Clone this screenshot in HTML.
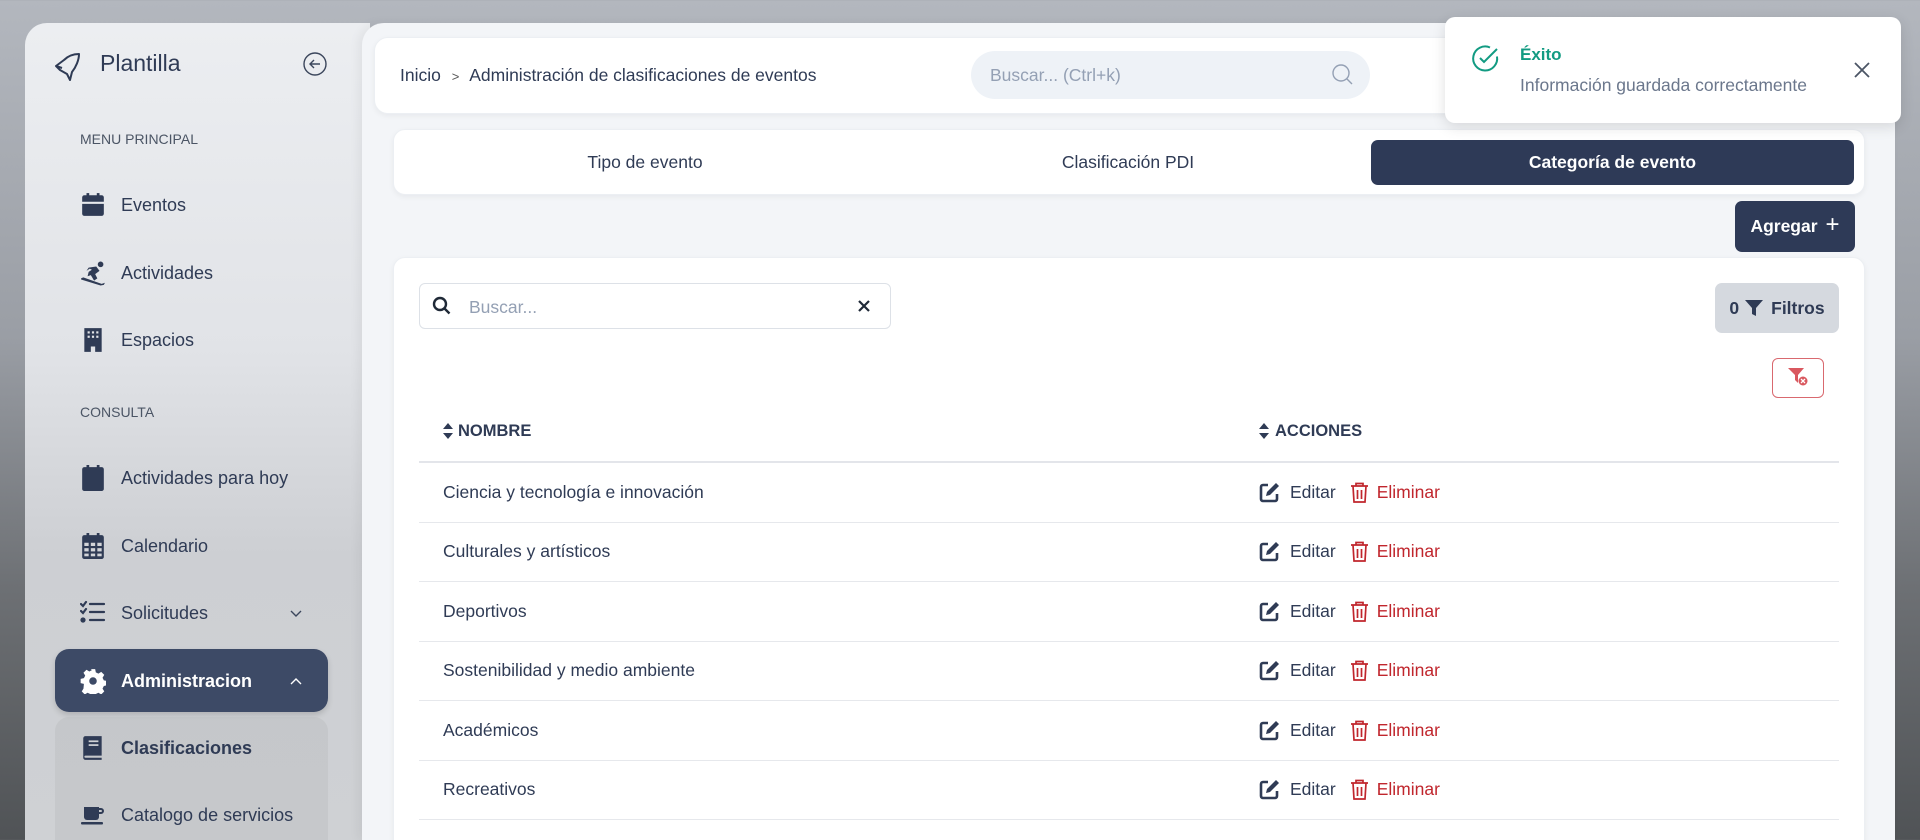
<!DOCTYPE html>
<html><head><meta charset="utf-8"><style>
*{box-sizing:border-box;margin:0;padding:0}
html{width:1920px;height:840px;overflow:hidden}
body{width:1920px;height:840px;overflow:hidden;font-family:"Liberation Sans",sans-serif;color:#2f3b55;position:relative;
background:linear-gradient(180deg,#b3b7be 0%,#9a9ea5 40%,#6d7074 70%,#505356 100%);}
.abs{position:absolute}
.side{left:25px;top:23px;width:345px;height:817px;border-radius:22px 0 0 0;background:linear-gradient(180deg,#eceef1 0%,#e1e3e7 40%,#cdcfd3 65%,#cfd1d4 100%);}
.main{left:362px;top:23px;width:1533px;height:817px;border-radius:22px 22px 0 0;background:#f3f5f8;box-shadow:-4px 0 10px rgba(0,0,0,.05)}
.card{background:#fff;border-radius:12px;box-shadow:0 2px 6px rgba(0,0,0,.05);border:1px solid #eceff3}
.item{position:absolute;left:80px;display:flex;align-items:center;font-size:18px;color:#2f3b55;height:30px}
.item svg{width:26px;height:26px;margin-right:15px}
.sec{position:absolute;left:80px;font-size:14px;color:#4b5565}
.tab{position:absolute;top:140px;height:45px;display:flex;align-items:center;justify-content:center;font-size:17.5px;color:#2f3b55}
.row{position:absolute;left:419px;width:1420px;height:59.5px;border-bottom:1.5px solid #e6e8ec;font-size:17.5px;display:flex;align-items:center}
.row .n{position:absolute;left:24px}
.row .a{position:absolute;left:840px;display:flex;align-items:center}
.ed{color:#2f3b55;margin:0 14px 0 10px}
.el{color:#c0262d;margin-left:8px}
</style></head><body>
<div class="abs side"></div>
<div class="abs main"></div>

<!-- sidebar -->
<svg class="abs" style="left:54px;top:52px" width="28" height="30" viewBox="0 0 28 30" fill="none" stroke="#2f3b55" stroke-width="2" stroke-linejoin="round"><path d="M2 14 L10 8 C15 3 21 2 25 2 C25 8 22 15 18 20 L16 28 L13 22 L6 18 Z"/><path d="M8 16 L2 14"/></svg>
<div class="abs" style="left:100px;top:50px;font-size:23px;color:#2f3b55">Plantilla</div>
<svg class="abs" style="left:303px;top:52px" width="24" height="24" viewBox="0 0 24 24" fill="none" stroke="#3b465c" stroke-width="1.4"><circle cx="12" cy="12" r="11"/><path d="M17 12H7M11 8l-4 4 4 4"/></svg>
<div class="sec" style="top:131px">MENU PRINCIPAL</div>
<div class="item" style="top:190px"><svg viewBox="0 0 24 24" fill="#2f3b55"><rect x="6" y="1" width="2.5" height="4"/><rect x="15.5" y="1" width="2.5" height="4"/><path d="M2 5a2 2 0 0 1 2-2h16a2 2 0 0 1 2 2v4H2z"/><path d="M2 11h20v9a2 2 0 0 1-2 2H4a2 2 0 0 1-2-2z"/></svg>Eventos</div>
<div class="item" style="top:258px"><svg viewBox="0 0 24 24" fill="#2f3b55"><circle cx="19" cy="4" r="2.6"/><path d="M8 7l7-1 3 4-4 3 2 4-3 2-3-5 -3 1 1-4 3-2-2-1-3 2z"/><path d="M1 17l2-1 17 6 3-1-1 2-3 .5L1 18z"/></svg>Actividades</div>
<div class="item" style="top:325px"><svg viewBox="0 0 24 24" fill="#2f3b55"><path d="M4 1h16v22h-6v-5h-4v5H4z"/><g fill="#e2e4e8"><rect x="7" y="4" width="2" height="2"/><rect x="11" y="4" width="2" height="2"/><rect x="15" y="4" width="2" height="2"/><rect x="7" y="8" width="2" height="2"/><rect x="11" y="8" width="2" height="2"/><rect x="15" y="8" width="2" height="2"/></g></svg>Espacios</div>
<div class="sec" style="top:404px">CONSULTA</div>
<div class="item" style="top:463px"><svg viewBox="0 0 24 24" fill="#2f3b55"><rect x="6" y="0" width="2.5" height="4"/><rect x="15.5" y="0" width="2.5" height="4"/><path d="M2 4a2 2 0 0 1 2-2h16a2 2 0 0 1 2 2v18a2 2 0 0 1-2 2H4a2 2 0 0 1-2-2z"/></svg>Actividades para hoy</div>
<div class="item" style="top:531px"><svg viewBox="0 0 24 24" fill="#2f3b55"><rect x="6" y="0" width="2.5" height="4"/><rect x="15.5" y="0" width="2.5" height="4"/><path d="M2 4a2 2 0 0 1 2-2h16a2 2 0 0 1 2 2v18a2 2 0 0 1-2 2H4a2 2 0 0 1-2-2z"/><g fill="#d2d4d8"><rect x="4" y="9" width="4" height="3"/><rect x="10" y="9" width="4" height="3"/><rect x="16" y="9" width="4" height="3"/><rect x="4" y="14" width="4" height="3"/><rect x="10" y="14" width="4" height="3"/><rect x="16" y="14" width="4" height="3"/><rect x="4" y="19" width="4" height="2.5"/><rect x="10" y="19" width="4" height="2.5"/><rect x="16" y="19" width="4" height="2.5"/></g></svg>Calendario</div>
<div class="item" style="top:598px"><svg viewBox="0 0 26 24" fill="none" stroke="#2f3b55" stroke-width="2.2" stroke-linecap="round"><path d="M1 3l2 2 3-4M1 10l2 2 3-4"/><path d="M10 3h14M10 11h14M10 19h14"/><circle cx="3" cy="19" r="1.5" fill="#2f3b55"/></svg>Solicitudes</div>
<svg class="abs" style="left:289px;top:609px" width="14" height="9" viewBox="0 0 14 9" fill="none" stroke="#3b465c" stroke-width="1.4"><path d="M2 2l5 5 5-5"/></svg>
<div class="abs" style="left:55px;top:649px;width:273px;height:63px;border-radius:14px;background:#3d4a66;box-shadow:0 3px 6px rgba(0,0,0,.15)"></div>
<div class="item" style="top:666px;color:#fff;font-weight:bold"><svg viewBox="0 0 24 24" fill="#fff"><path d="M10 1h4l.6 3 2.4 1.2 2.6-1.6 2.8 2.8-1.6 2.6 1.2 2.4 3 .6v4l-3 .6-1.2 2.4 1.6 2.6-2.8 2.8-2.6-1.6-2.4 1.2-.6 3h-4l-.6-3-2.4-1.2-2.6 1.6-2.8-2.8 1.6-2.6L3.6 14.6 .6 14v-4l3-.6 1.2-2.4-1.6-2.6L6 1.6l2.6 1.6L11 2z"/><circle cx="12" cy="12" r="3.5" fill="#3d4a66"/></svg>Administracion</div>
<svg class="abs" style="left:289px;top:677px" width="14" height="9" viewBox="0 0 14 9" fill="none" stroke="#fff" stroke-width="1.4"><path d="M2 7l5-5 5 5"/></svg>
<div class="abs" style="left:55px;top:717px;width:273px;height:123px;border-radius:14px 14px 0 0;background:rgba(180,182,186,.35)"></div>
<div class="item" style="top:733px;font-weight:bold"><svg viewBox="0 0 24 24" fill="#2f3b55"><path d="M3 3a2 2 0 0 1 2-2h15v18H5a1 1 0 0 0 0 2h15v2H5a2 2 0 0 1-2-2z"/><g fill="#d0d2d6"><rect x="8" y="5" width="9" height="1.6"/><rect x="8" y="8.5" width="9" height="1.6"/></g></svg>Clasificaciones</div>
<div class="item" style="top:800px"><svg viewBox="0 0 26 24" fill="#2f3b55"><path d="M4 4h15v10a3 3 0 0 1-3 3H7a3 3 0 0 1-3-3z"/><path d="M19 5h2a3 3 0 0 1 0 6h-2v-2h2a1 1 0 0 0 0-2h-2z"/><rect x="1" y="19" width="22" height="2.5" rx="1"/></svg>Catalogo de servicios</div>

<!-- top bar -->
<div class="abs card" style="left:374px;top:37px;width:1490px;height:77px;border-radius:14px"></div>
<div class="abs" style="left:400px;top:65px;font-size:17.5px;color:#2f3b55">Inicio <span style="font-size:13px;color:#555;margin:0 6px">&gt;</span> Administración de clasificaciones de eventos</div>
<div class="abs" style="left:971px;top:51px;width:399px;height:48px;border-radius:24px;background:#eef2f7"></div>
<div class="abs" style="left:990px;top:65px;font-size:17.5px;color:#94a0b4">Buscar... (Ctrl+k)</div>
<svg class="abs" style="left:1331px;top:63px" width="24" height="24" viewBox="0 0 24 24" fill="none" stroke="#94a0b4" stroke-width="1.4"><circle cx="10" cy="10" r="8"/><path d="M16 16l5 5"/></svg>

<!-- tabs -->
<div class="abs card" style="left:393px;top:129px;width:1472px;height:66px"></div>
<div class="tab" style="left:400px;width:490px">Tipo de evento</div>
<div class="tab" style="left:885px;width:486px">Clasificación PDI</div>
<div class="tab" style="left:1371px;width:483px;background:#2e3a57;color:#fff;font-weight:bold;border-radius:7px">Categoría de evento</div>

<div class="abs" style="left:1735px;top:201px;width:120px;height:51px;border-radius:7px;background:#2e3a57;color:#fff;font-weight:bold;font-size:17.5px;display:flex;align-items:center;justify-content:center">Agregar <span style="font-weight:normal;font-size:24px;margin-left:8px;margin-top:-3px">+</span></div>

<!-- table card -->
<div class="abs card" style="left:393px;top:257px;width:1472px;height:600px"></div>
<div class="abs" style="left:419px;top:283px;width:472px;height:46px;border:1px solid #dde1e7;border-radius:6px;background:#fff"></div>
<svg class="abs" style="left:432px;top:296px" width="20" height="20" viewBox="0 0 20 20" fill="none" stroke="#1f2937" stroke-width="2.4"><circle cx="8" cy="8" r="6"/><path d="M12.5 12.5l5 5"/></svg>
<div class="abs" style="left:469px;top:297px;font-size:17.5px;color:#94a0b4">Buscar...</div>
<svg class="abs" style="left:858px;top:300px" width="12" height="12" viewBox="0 0 12 12" stroke="#1f2937" stroke-width="2.2"><path d="M1 1l10 10M11 1L1 11"/></svg>
<div class="abs" style="left:1715px;top:283px;width:124px;height:50px;border-radius:7px;background:#d5d9df;display:flex;align-items:center;justify-content:center;font-size:17.5px;color:#2f3b55;font-weight:bold">0 <svg width="18" height="18" viewBox="0 0 18 18" style="margin:0 8px 0 6px"><path d="M0 1h18l-7 8v8l-4-2v-6z" fill="#2f3b55"/></svg> Filtros</div>
<div class="abs" style="left:1772px;top:358px;width:52px;height:40px;border:1.5px solid #d9696f;border-radius:6px;background:#fff"></div>
<svg class="abs" style="left:1788px;top:368px" width="22" height="20" viewBox="0 0 22 20"><path d="M0 0h16l-6 7v8l-3-3V7z" fill="#d9585f"/><circle cx="15" cy="13" r="4.5" fill="#d9585f"/><path d="M13 11l4 4M17 11l-4 4" stroke="#fff" stroke-width="1.3"/></svg>

<svg class="abs" style="left:443px;top:423px" width="10" height="16" viewBox="0 0 10 16" fill="#2f3b55"><path d="M5 0l5 6H0zM5 16l5-6H0z"/></svg>
<div class="abs" style="left:458px;top:422px;font-size:16.5px;font-weight:bold;color:#2f3b55">NOMBRE</div>
<svg class="abs" style="left:1259px;top:423px" width="10" height="16" viewBox="0 0 10 16" fill="#2f3b55"><path d="M5 0l5 6H0zM5 16l5-6H0z"/></svg>
<div class="abs" style="left:1275px;top:422px;font-size:16.5px;font-weight:bold;color:#2f3b55">ACCIONES</div>
<div class="abs" style="left:419px;top:461px;width:1420px;height:2px;background:#e3e5ea"></div>

<div class="row" style="top:463px"><span class="n">Ciencia y tecnología e innovación</span><span class="a"></span></div>
<div class="row" style="top:522.5px"><span class="n">Culturales y artísticos</span><span class="a"></span></div>
<div class="row" style="top:582px"><span class="n">Deportivos</span><span class="a"></span></div>
<div class="row" style="top:641.5px"><span class="n">Sostenibilidad y medio ambiente</span><span class="a"></span></div>
<div class="row" style="top:701px"><span class="n">Académicos</span><span class="a"></span></div>
<div class="row" style="top:760.5px"><span class="n">Recreativos</span><span class="a"></span></div>

<!-- toast -->
<div class="abs" style="left:1445px;top:17px;width:456px;height:106px;background:#fff;border-radius:10px;box-shadow:0 4px 14px rgba(0,0,0,.12)"></div>
<svg class="abs" style="left:1471px;top:44px" width="29" height="29" viewBox="0 0 29 29" fill="none" stroke="#129b82" stroke-width="2"><path d="M26 12.5A12 12 0 1 1 19 3.5"/><path d="M9 14l4 4 13-13"/></svg>
<div class="abs" style="left:1520px;top:45px;font-size:17px;font-weight:bold;color:#129b82">Éxito</div>
<div class="abs" style="left:1520px;top:75px;font-size:17.5px;color:#6b778c">Información guardada correctamente</div>
<svg class="abs" style="left:1854px;top:62px" width="16" height="16" viewBox="0 0 16 16" stroke="#4b5565" stroke-width="1.8"><path d="M1 1l14 14M15 1L1 15"/></svg>

<script>
var h='<svg width="21" height="21" viewBox="0 0 21 21"><path d="M9 3H4a2 2 0 0 0-2 2v12a2 2 0 0 0 2 2h12a2 2 0 0 0 2-2v-5" fill="none" stroke="#2f3b55" stroke-width="2.6"/><path d="M17 1l3 3-9 9-4 1 1-4z" fill="#2f3b55"/></svg><span class="ed">Editar</span><svg width="19" height="21" viewBox="0 0 19 21" fill="none" stroke="#c0262d" stroke-width="1.7"><path d="M1 4h17M6 4V1.5h7V4M3 4l1 16h11l1-16M7.5 8v9M11.5 8v9"/></svg><span class="el">Eliminar</span>';
document.querySelectorAll('.row .a').forEach(function(e){e.innerHTML=h});
</script>
</body></html>
